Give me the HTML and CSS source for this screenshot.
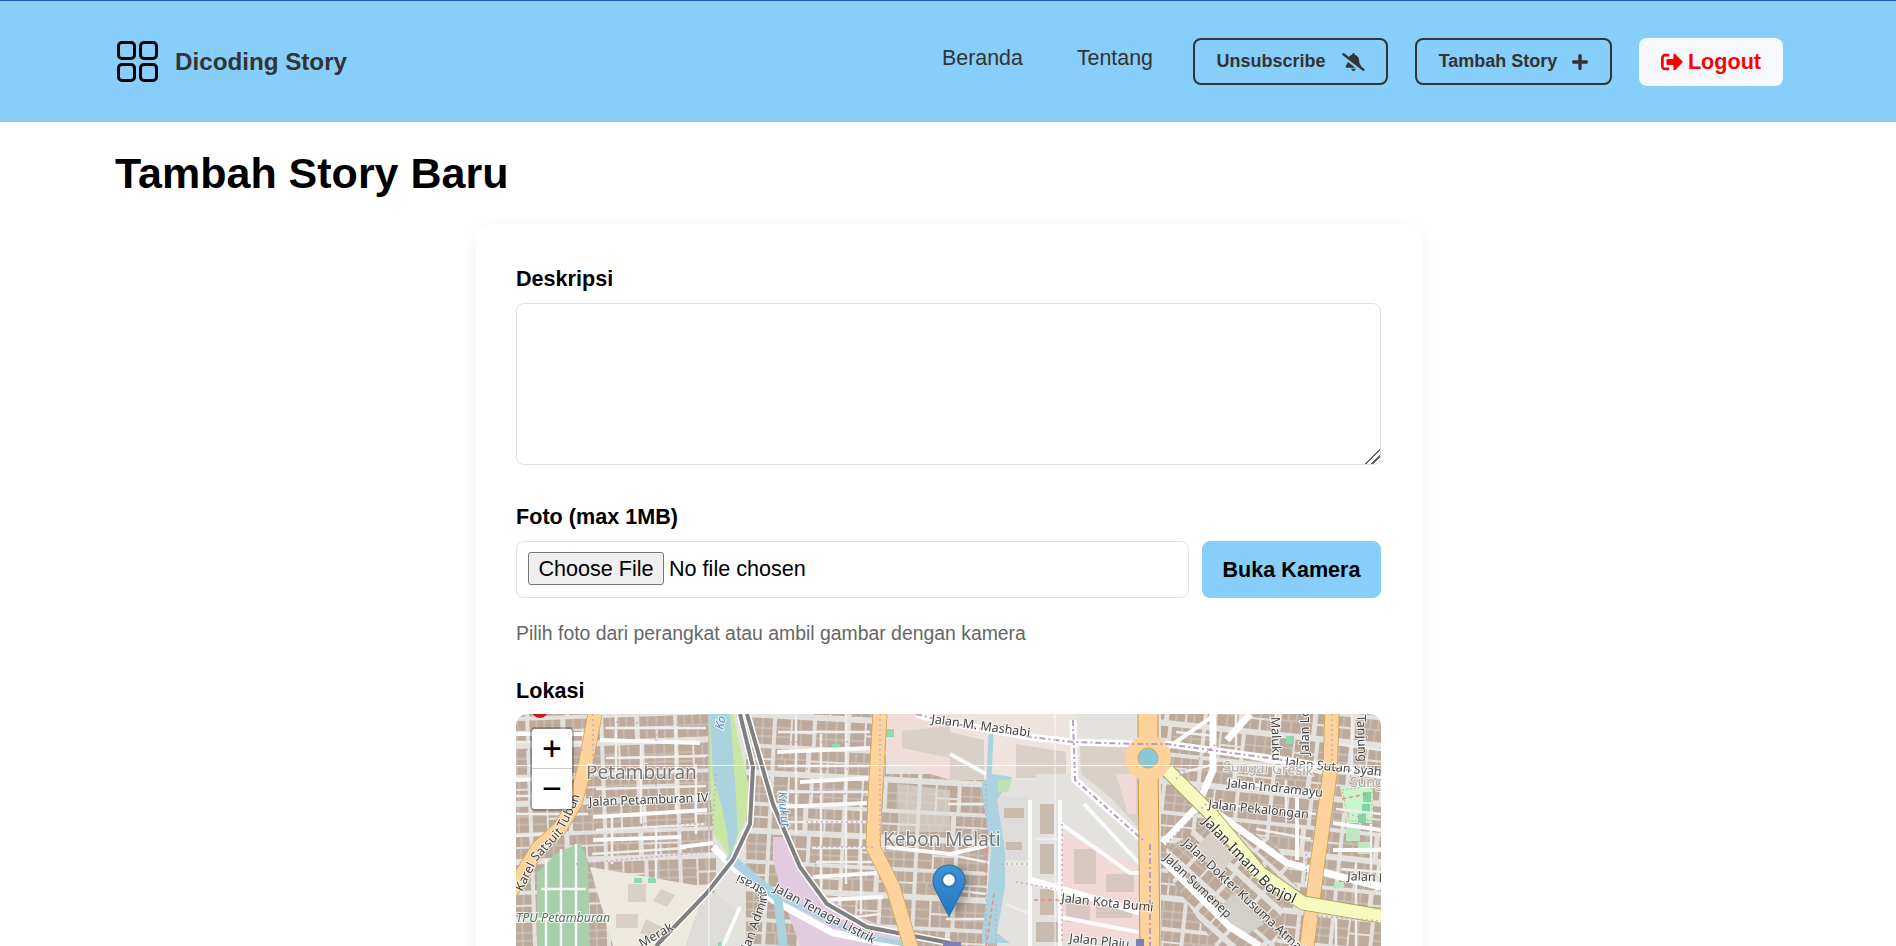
FILE: index.html
```html
<!DOCTYPE html>
<html lang="id">
<head>
<meta charset="utf-8">
<title>Tambah Story Baru</title>
<link rel="stylesheet" href="styles.css">
</head>
<body>
<header class="site-header">
  <a class="brand" href="#">
    <svg class="brand-icon" viewBox="0 0 41 41" fill="none" stroke="#000" stroke-width="3"><rect x="1.5" y="1.5" width="16" height="16" rx="3.5"/><rect x="23.5" y="1.5" width="16" height="16" rx="3.5"/><rect x="1.5" y="23.5" width="16" height="16" rx="3.5"/><rect x="23.5" y="23.5" width="16" height="16" rx="3.5"/></svg>
    <span>Dicoding Story</span>
  </a>
  <nav class="nav">
    <a class="nav-link" href="#">Beranda</a>
    <a class="nav-link" href="#">Tentang</a>
    <a class="nav-btn nav-btn-sub" href="#">Unsubscribe
      <svg class="icon-bell" viewBox="0 0 640 512"><path d="M633.82 458.1l-90.62-70.05c.19-1.38.8-2.66.8-4.06.05-8.16-3.13-16.09-8.61-21.97-19.32-20.76-55.47-51.99-55.47-154.29 0-77.7-54.48-139.9-127.94-155.16V32c0-17.67-14.32-32-31.98-32s-31.98 14.33-31.98 32v20.84c-40.33 8.38-74.66 31.07-97.59 62.57L45.47 3.37C38.49-2.05 28.43-.8 23.01 6.18L3.37 31.45C-2.05 38.42-.8 48.47 6.18 53.9l588.35 454.72c6.98 5.43 17.03 4.17 22.46-2.81l19.64-25.27c5.42-6.97 4.17-17.02-2.81-22.44zM157.23 251.54c-8.61 67.96-36.41 93.33-52.62 110.75-6 6.45-8.66 14.16-8.61 21.71.11 16.4 12.98 32 32.1 32h241.92L157.23 251.54zM320 512c35.32 0 63.97-28.65 63.97-64H256.03c0 35.35 28.65 64 63.97 64z"/></svg>
    </a>
    <a class="nav-btn nav-btn-add" href="#">Tambah Story
      <svg class="icon-plus" viewBox="0 0 448 512"><path d="M416 208H272V64c0-17.67-14.33-32-32-32h-32c-17.67 0-32 14.33-32 32v144H32c-17.67 0-32 14.33-32 32v32c0 17.67 14.33 32 32 32h144v144c0 17.67 14.33 32 32 32h32c17.67 0 32-14.33 32-32V304h144c17.67 0 32-14.33 32-32v-32c0-17.67-14.33-32-32-32z"/></svg>
    </a>
    <a class="logout" href="#">
      <svg class="icon-logout" viewBox="0 0 512 512"><path d="M497 273L329 441c-15 15-41 4.5-41-17v-96H152c-13.3 0-24-10.7-24-24v-96c0-13.3 10.7-24 24-24h136V88c0-21.4 25.9-32 41-17l168 168c9.3 9.4 9.3 24.6 0 34zM192 436v-40c0-6.6-5.4-12-12-12H96c-17.7 0-32-14.3-32-32V160c0-17.7 14.3-32 32-32h84c6.6 0 12-5.4 12-12V76c0-6.6-5.4-12-12-12H96c-53 0-96 43-96 96v192c0 53 43 96 96 96h84c6.6 0 12-5.4 12-12z"/></svg>
      Logout
    </a>
  </nav>
</header>

<main class="page">
  <h1 class="page-title">Tambah Story Baru</h1>
  <form class="card">
    <label class="label" for="desc">Deskripsi</label>
    <textarea class="textarea" id="desc"></textarea>

    <label class="label" for="photo">Foto (max 1MB)</label>
    <div class="photo-row">
      <input class="file" id="photo" type="file">
      <button class="camera-btn" type="button">Buka Kamera</button>
    </div>
    <p class="hint">Pilih foto dari perangkat atau ambil gambar dengan kamera</p>

    <div class="label label-map">Lokasi</div>
    <div class="map">
      <svg class="map-art" viewBox="0 0 866 400" preserveAspectRatio="xMinYMin slice">
        <defs>
          <pattern id="res" width="74" height="58" patternUnits="userSpaceOnUse">
            <rect width="74" height="58" fill="#e4e2df"/>
            <path d="M2 2h31v22H2zM38 2h34v10H38zM38 14h16v10H38zM56 14h16v10H56zM2 30h14v26H2zM18 30h20v12H18zM18 44h20v12H18zM42 30h30v26H42z" fill="#bcab9c"/>
            <path d="M9 2v10M17 2v10M25 2v10M2 12h31M12 12v12M22 12v12M46 2v10M55 2v10M64 2v10M45 14v10M63 14v10M2 39h14M2 48h14M26 30v12M27 44v12M42 40h30M42 48h30M52 30v26M62 30v26" fill="none" stroke="#d4cbc2" stroke-width="1"/>
          </pattern>
          <pattern id="resA" href="#res" patternTransform="rotate(-2) translate(11 5)"/>
          <pattern id="resB" href="#res" patternTransform="rotate(3) translate(37 19)"/>
          <pattern id="resC" href="#res" patternTransform="rotate(42) translate(9 14)"/>
          <pattern id="resE" href="#res" patternTransform="rotate(6) translate(20 30)"/>
          <filter id="soft" x="0" y="0" width="100%" height="100%"><feGaussianBlur stdDeviation="0.55"/></filter>
        </defs>
        <g class="map-tiles" filter="url(#soft)">
          <rect width="866" height="400" fill="#e4e2df"/>
          <rect width="200" height="232" fill="url(#resA)"/>
          <rect x="230" width="140" height="232" fill="url(#resB)"/>
          <path d="M370 60H481V232H370z" fill="url(#resB)"/>
          <path d="M645 0H866V232H645z" fill="url(#resE)"/>
          <path d="M21 159L41 139 64 129 72 146 74 233H21z" fill="#a7cfa9"/>
          <path d="M25 175H70M30 145V232M45 135V232M60 130V232M22 205H72" class="r-thin"/>
          <path d="M74 153L190 173 170 232H97z" fill="#eee9df"/>
          <path d="M112 170h18v18h-18zM145 175l14 6-8 12-14-6zM100 200h22v14h-22zM130 205l20 10-8 12-18-8z" fill="#d9d0c9"/>
          <path d="M190 173L225 200 207 232H170z" fill="#dedcd9"/>
          <path d="M257 123L270 123 297 173 334 199 384 219V232H284L270 193 257 146z" fill="#e0cbdf"/>
          <path d="M370 0H434V66L370 46z" fill="#f0dcd9"/>
          <path d="M386 17L434 12V44L386 34z" fill="#d9d0c9"/>
          <path d="M434 0H560V66H434z" fill="#efe3df"/>
          <path d="M434 18L468 26V66H434zM500 30L550 38V64H500z" fill="#d9d0c9"/>
          <path d="M382 70L434 76V118H382z" fill="#dedcd9" opacity=".55"/>
          <path d="M520 60H566L627 119V232H520z" fill="#e4e2df"/>
          <path d="M564 32L622 32 627 119 594 83 565 60z" fill="#d9d0c9"/>
          <path d="M600 60h20v40h-8z" fill="#f2d9d8"/>
          <path d="M481 83H514V146H481z" fill="#dddcdb"/>
          <path d="M488 94h20v10h-20zM490 128h16v8h-16z" fill="#c9bbae"/>
          <path d="M544 119L624 153V226H544z" fill="#f2d9d8"/>
          <path d="M558 135h22v35h-22zM590 160h28v18h-28zM550 180h24v28h-24zM580 190h36v14h-36z" fill="#d9c8c2"/>
          <path d="M524 90h14v30h-14zM524 130h14v30h-14zM524 175h14v26h-14zM520 208h22v20h-22z" fill="#c9bbae"/>
          <path d="M650 135L700 105 770 175 760 232H700L652 160z" fill="url(#resC)"/>
          <path d="M676 136L695 118 720 142 704 160z" fill="#d9d0c9"/>
          <path d="M720 178l28 32-20 12-26-28z" fill="#d3cfcb"/>
          <path d="M700 100L790 190 760 130z" fill="url(#resC)"/>
          <path d="M824 73L857 69V109H831z" fill="#c9f5cd"/>
          <path d="M826 76L856 72V107H833z" fill="none" stroke="#ee9a8a" stroke-dasharray="2 2"/>
          <path d="M847 78h8v10h-8zM846 90h8v10h-8zM842 100h8v9h-8z" fill="#7fd6a3"/>
          <path d="M830 113h14v14h-14zM842 128h12v12h-12zM818 168h10v6h-10z" fill="#bde8c2"/>
          <path d="M360 15h18v8h-18zM110 84h7v4h-7zM118 164h8v5h-8zM132 164h8v5h-8zM202 228h8v5h-8zM346 212h8v5h-8zM316 30h8v6h-8zM770 22h8v8h-8z" fill="#8fd9ae"/>

          <g class="r-lane">
            <path d="M0 28H78M90 14H190M90 44L190 42M0 82H60M0 100H72M80 75L190 72M80 116L190 110M76 140L170 134M0 122L30 120"/>
            <path d="M100 0V60M125 30V110M160 10V100M180 50V120M96 100V150M140 112V165"/>
            <path d="M262 18H354M262 52H354M262 78H354M262 108H352M296 134H352M300 148H360M320 205L365 200"/>
            <path d="M280 0V120M305 20V180M330 0V170M345 90V200"/>
            <path d="M660 18L700 22M715 40L810 60M700 90L800 100M740 115L795 125M820 30L865 36M820 95L865 100M825 155L865 158M660 60L700 50M800 130L790 170"/>
            <path d="M720 0V44M760 0V60M770 66V100M836 0V60M855 110V170M840 150V232M820 190V232"/>
            <path d="M522 170H548M520 125H548M480 150H514M430 140L480 150M430 175L470 180M430 205H470M490 190L514 200M432 90L470 90"/>
          </g>

          <g class="r-white">
            <path d="M400 0L434 9 514 23 557 28 620 30 651 30 767 46 865 61"/>
            <path d="M557 6L559 66 627 126"/>
            <path d="M647 129L681 93 697 56 697 0"/>
            <path d="M711 26L734 0"/>
            <path d="M647 146L714 213 744 232"/>
            <path d="M701 99L771 149 865 173"/>
            <path d="M514 166L627 199"/>
            <path d="M197 133L217 153 257 186 317 219 384 232"/>
          </g>
          <g class="r-mid">
            <path d="M514 86V232"/>
            <path d="M544 109L614 159H627"/>
            <path d="M568 90L624 150"/>
            <path d="M711 66L811 83"/>
            <path d="M817 109L865 116"/>
            <path d="M817 136H865"/>
            <path d="M781 83V146"/>
            <path d="M544 203L627 219"/>
            <path d="M261 38L354 34"/>
            <path d="M284 68L354 64"/>
            <path d="M261 93L351 89"/>
            <path d="M297 163L361 159"/>
            <path d="M307 186L367 183"/>
            <path d="M0 20L80 20"/>
            <path d="M84 26L184 29"/>
            <path d="M0 66L62 64"/>
            <path d="M77 103L191 96"/>
            <path d="M77 126L165 123"/>
            <path d="M164 133L197 129"/>
            <path d="M224 193L207 232"/>
            <path d="M434 40L470 60"/>
            <path d="M370 133L434 140 470 132"/>
            <path d="M544 86V232"/>
            <path d="M700 0L650 35"/>
          </g>

          <path d="M194 0H217L232 69 232 99 214 143 197 119 194 69z" fill="#c9e7a3"/>
          <path d="M194 0H214L219 69 222 119 214 143 211 119 206 93 197 63z" fill="#aad3df"/>
          <path d="M193 0V118" fill="none" stroke="#999" stroke-width="1.500"/>
          <path d="M212 142L262 184 268 240" class="w-canal"/>
          <path d="M270 186L345 222 400 232" class="w-canal w-thin"/>
          <path d="M466 69L476 60 496 63 481 86 489 136 489 173 481 219 494 229H466V219L472 173 475 136 467 86z" fill="#aad3df"/>
          <path d="M475 20L473 64" class="w-canal w-thin"/>
          <path d="M482 66h14l-4 12h-10z" fill="#bfe2b6"/>

          <g class="rail">
            <path d="M224 0L237 53 234 110 217 146 190 180 140 232"/>
            <path d="M231 0L257 90 284 153 311 190 351 213 434 229"/>
          </g>
          <g class="rail-top">
            <path d="M224 0L237 53 234 110 217 146 190 180 140 232"/>
            <path d="M231 0L257 90 284 153 311 190 351 213 434 229"/>
          </g>

          <path d="M-5 178L22 134 44 114 59 89 69 53 79 0" class="r-major"/>
          <path d="M-5 178L22 134 44 114 59 89 69 53 79 0" class="r-major r-major-in"/>
          <path d="M364 0L359 86 357 133 377 173 397 240" class="r-major"/>
          <path d="M364 0L359 86 357 133 377 173 397 240" class="r-major r-major-in"/>
          <path d="M816 0L814 59 801 153 790 240" class="r-major"/>
          <path d="M816 0L814 59 801 153 790 240" class="r-major r-major-in"/>
          <path d="M651 56L694 99 744 159 787 189 870 203" class="r-sec"/>
          <path d="M651 56L694 99 744 159 787 189 870 203" class="r-sec r-sec-in"/>
          <path d="M632 0V44L634 240" class="r-trunk"/>
          <path d="M632 0V44L634 240" class="r-trunk r-trunk-in"/>
          <circle cx="632" cy="44" r="23" fill="#fdd29b"/>
          <circle cx="632" cy="44" r="10" fill="#8cc7d8" stroke="#c9a566"/>

          <g class="cycle">
            <path d="M400 0L434 9 514 23 557 28 620 30 651 30 767 46 865 61"/>
            <path d="M557 6L559 66 627 126"/>
            <path d="M634 130V232"/>
          </g>
          <g class="foot">
            <path d="M77 0V80M0 36H70M100 8L190 12M140 20V90M150 62H190M108 110H190M60 150L190 138M200 60L195 130"/>
            <path d="M270 28H355M270 55H350M268 80H350M290 108H355M300 135V160"/>
            <path d="M357 133H300M434 120H480M480 150H514M500 168L540 175"/>
            <path d="M470 70V230M480 190V232M546 110V230"/>
            <path d="M650 130L690 90M790 130V170M817 95L865 110M660 65L700 30"/>
            <path d="M800 202L865 207"/>
            <path d="M364 0V130M816 0V60"/>
          </g>
          <path d="M470 120V170M478 180L470 232M518 186H560M826 85L850 80" class="red-dash"/>

          <path d="M427 228h18v12h-18zM620 225h8v12h-8z" fill="#7b80b8"/>
          <circle cx="24" cy="-4" r="8" fill="#c01a1f"/>

          <path id="pKarel" d="M6 178L22 146 46 120 62 88 70 60" fill="none"/>
          <path id="pBonjol" d="M686 108L728 152 752 178 782 192" fill="none"/>
          <path id="pAdmin" d="M230 246L250 190C254 176 246 172 238 168L222 160" fill="none"/>

          <text class="t-place" x="70" y="65">Petamburan</text>
          <text class="t-place" x="367" y="132">Kebon Melati</text>
          <text class="t-road" transform="translate(73 92) rotate(-2)">Jalan Petamburan IV</text>
          <text class="t-park" x="0" y="208">TPU Petamburan</text>
          <text class="t-road"><textPath href="#pKarel">Karel Satsuit Tubun</textPath></text>
          <text class="t-water" transform="translate(262 78) rotate(84)">Krukut</text>
          <text class="t-water" transform="translate(207 16) rotate(-78)">Ko</text>
          <text class="t-road" transform="translate(257 177) rotate(28)">Jalan Tenaga Listrik</text>
          <text class="t-road"><textPath href="#pAdmin">Jalan Administrasi</textPath></text>
          <text class="t-road" transform="translate(126 234) rotate(-30)">Merak</text>
          <text class="t-road" transform="translate(415 9) rotate(8)">Jalan M. Mashabi</text>
          <text class="t-road" transform="translate(769 52) rotate(6)">Jalan Sutan Syahrir</text>
          <text class="t-faint" transform="translate(707 57) rotate(3)">Sungai Gresik</text>
          <text class="t-faint" x="834" y="73">Sungai</text>
          <text class="t-road" transform="translate(711 73) rotate(6)">Jalan Indramayu</text>
          <text class="t-road" transform="translate(692 94) rotate(6)">Jalan Pekalongan</text>
          <text class="t-bonjol"><textPath href="#pBonjol">Jalan Imam Bonjol</textPath></text>
          <text class="t-road" transform="translate(666 130) rotate(43)">Jalan Dokter Kusuma Atmaja</text>
          <text class="t-road" transform="translate(647 145) rotate(43)">Jalan Sumenep</text>
          <text class="t-road" transform="translate(545 188) rotate(6)">Jalan Kota Bumi</text>
          <text class="t-road" transform="translate(553 228) rotate(6)">Jalan Plaju</text>
          <text class="t-road" transform="translate(831 166) rotate(3)">Jalan Bali</text>
          <text class="t-road" transform="translate(755 3) rotate(88)">Maluku</text>
          <text class="t-road" transform="translate(793 41) rotate(-90)">Jalan Lombok</text>
          <text class="t-road" transform="translate(841 1) rotate(88)">Tanjung</text>

          <path d="M0 51.5H866M193 0V232M539 0V232" class="seam"/>
        </g>
      </svg>

      <div class="zoom-control">
        <a class="zoom-btn" href="#">+</a>
        <a class="zoom-btn" href="#">&#8722;</a>
      </div>

      <svg class="pin" viewBox="0 0 34 53">
        <defs>
          <linearGradient id="pinFill" x1="0" y1="0" x2="0" y2="1">
            <stop offset="0" stop-color="#3f93d6"/>
            <stop offset="1" stop-color="#2477c4"/>
          </linearGradient>
        </defs>
        <path d="M17 1C8 1 1 8 1 17c0 3 .9 5.800 2.300 8.400L17 52l13.700-26.600C32.100 22.800 33 20 33 17 33 8 26 1 17 1z" fill="url(#pinFill)" stroke="#2d6f9f" stroke-width="1.200"/>
        <circle cx="17" cy="16" r="8" fill="#2a6ea3" opacity=".55"/>
        <circle cx="17" cy="16" r="5.800" fill="#fff"/>
      </svg>
    </div>
  </form>
</main>
</body>
</html>
```

FILE: styles.css
```css
* { box-sizing: border-box; }

html, body {
  height: 100%;
  margin: 0;
  overflow: hidden;
}

body {
  background: #fff;
  color: #000;
  font-family: "Liberation Sans", Arial, sans-serif;
  display: flex;
  flex-direction: column;
}

.site-header {
  flex: none;
  height: 122px;
  background: #87cefa;
  border-top: 1px solid #1b5cb0;
  padding: 0 113px 0 115px;
  display: flex;
  align-items: center;
  justify-content: space-between;
  color: #333;
}

.brand {
  display: flex;
  align-items: center;
  gap: 17px;
  margin-left: 2px;
  color: #333;
  text-decoration: none;
  font-size: 24.200px;
  font-weight: 700;
}

.brand-icon {
  width: 41px;
  height: 41px;
}

.nav {
  display: flex;
  align-items: center;
  gap: 27px;
}

.nav-link {
  padding: 0 13px 6px 14px;
  color: #333;
  text-decoration: none;
  font-size: 21.400px;
}

.nav-btn {
  height: 47px;
  display: flex;
  align-items: center;
  justify-content: center;
  border: 2px solid #333;
  border-radius: 8px;
  color: #333;
  text-decoration: none;
  font-size: 18px;
  font-weight: 700;
}

.nav-btn-sub { width: 195px; gap: 16px; }
.nav-btn-add { width: 197px; gap: 15px; }

.icon-bell { width: 23px; height: 18px; fill: #333; }
.icon-plus { width: 16px; height: 18px; fill: #333; }

.logout {
  width: 144px;
  height: 48px;
  display: flex;
  align-items: center;
  justify-content: center;
  gap: 5px;
  background: #f8f9fc;
  border-radius: 8px;
  color: #f00;
  text-decoration: none;
  font-size: 21.600px;
  font-weight: 700;
}

.icon-logout { width: 22px; height: 22px; fill: #f00; }

.page {
  flex: 1;
  min-height: 0;
  overflow: hidden;
  padding: 0 113px 0 115px;
}

.page-title {
  margin: 25px 0 0;
  font-size: 43px;
  line-height: 52px;
  font-weight: 700;
}

.card {
  width: 946px;
  margin: 25px auto 0;
  padding: 42px 41px 40px 40px;
  background: #fff;
  border-radius: 16px;
  box-shadow: 0 4px 20px rgba(0, 0, 0, 0.05);
}

.label {
  display: block;
  margin-bottom: 11px;
  font-size: 21.600px;
  line-height: 26px;
  font-weight: 700;
}

.label-map { margin-bottom: 10px; }

.textarea {
  display: block;
  width: 100%;
  height: 162px;
  margin-bottom: 39px;
  border: 1px solid #dfdfdf;
  border-radius: 8px;
  background: #fff;
}

.textarea::-webkit-resizer {
  background: linear-gradient(135deg, transparent 47%, #666 47%, #666 55%, transparent 55%, transparent 70%, #666 70%, #666 78%, transparent 78%);
}

.photo-row {
  display: flex;
  gap: 13px;
  height: 57px;
}

.file {
  flex: 1;
  min-width: 0;
  padding: 10px 11px;
  border: 1px solid #e2e2e2;
  border-radius: 8px;
  font-family: "Liberation Sans", Arial, sans-serif;
  font-size: 21.600px;
}

.file::file-selector-button {
  width: 136px;
  height: 33px;
  margin-right: 5px;
  padding: 0;
  border: 1px solid #767676;
  border-radius: 3px;
  background: #efefef;
  font: inherit;
}

.camera-btn {
  width: 179px;
  padding: 0;
  border: 1px solid #87cefa;
  border-radius: 8px;
  background: #87cefa;
  color: #000;
  font-family: "Liberation Sans", Arial, sans-serif;
  font-size: 21.600px;
  font-weight: 700;
}

.hint {
  margin: 25px 0 35px;
  color: #666;
  font-size: 19.400px;
  line-height: 20px;
}

.map {
  position: relative;
  height: 400px;
  border-radius: 12px;
  overflow: hidden;
  background: #ded9d4;
}

.map-art {
  display: block;
  width: 100%;
  height: 400px;
  font-family: "Noto Sans", "Liberation Sans", sans-serif;
}

.r-white path { fill: none; stroke: #fff; stroke-width: 7; }
.r-mid path { fill: none; stroke: #fbfbfb; stroke-width: 4; }
.r-lane path { fill: none; stroke: #efeeec; stroke-width: 2.500; }
.r-thin { fill: none; stroke: #f6f6f6; stroke-width: 2.500; }
.w-canal { fill: none; stroke: #aad3df; stroke-width: 9; }
.w-thin { stroke-width: 5; }
.rail path { fill: none; stroke: #fff; stroke-width: 7; }
.rail-top path { fill: none; stroke: #808080; stroke-width: 4; }
.r-major { fill: none; stroke: #d5a251; stroke-width: 15; }
.r-major-in { stroke: #fdd29b; stroke-width: 13.500; }
.r-trunk { fill: none; stroke: #c9963f; stroke-width: 21; }
.r-trunk-in { stroke: #fdd29b; stroke-width: 19; }
.r-sec { fill: none; stroke: #a8a85c; stroke-width: 15; }
.r-sec-in { stroke: #f7fabf; stroke-width: 13; }
.cycle path { fill: none; stroke: #b79ec0; stroke-width: 2; stroke-dasharray: 6 3 2 3; }
.foot path { fill: none; stroke: #c9aacb; stroke-width: 1.500; stroke-dasharray: 2 3; }
.red-dash { fill: none; stroke: #ee8a7c; stroke-width: 1.500; stroke-dasharray: 4 3; }
.seam { fill: none; stroke: #fff; stroke-width: 1; opacity: 0.8; }

.map-art text { paint-order: stroke; stroke: #fff; stroke-width: 2px; stroke-opacity: 0.75; }
.t-place { font-size: 19px; fill: #777; }
.t-road { font-size: 12.500px; fill: #444; }
.t-park { font-size: 12.500px; font-style: italic; fill: #4f7a5a; }
.t-water { font-size: 12px; font-style: italic; fill: #4f8fc4; }
.t-faint { font-size: 14px; fill: #aaa; }
.t-bonjol { font-size: 14.500px; fill: #333; }

.zoom-control {
  position: absolute;
  top: 13px;
  left: 14px;
  width: 44px;
  border: 2px solid rgba(0, 0, 0, 0.25);
  border-radius: 5px;
  background-clip: padding-box;
}

.zoom-btn {
  display: block;
  height: 40px;
  background: #fff;
  color: #000;
  text-align: center;
  text-decoration: none;
  font-family: "DejaVu Sans Mono", monospace;
  font-size: 32px;
  line-height: 38px;
}

.zoom-btn:first-child {
  border-bottom: 1px solid #ccc;
  border-radius: 3px 3px 0 0;
}

.zoom-btn:last-child { border-radius: 0 0 3px 3px; }

.pin {
  position: absolute;
  left: 416px;
  top: 150px;
  width: 34px;
  height: 53px;
  filter: drop-shadow(6px 3px 4px rgba(0, 0, 0, 0.25));
}
```
